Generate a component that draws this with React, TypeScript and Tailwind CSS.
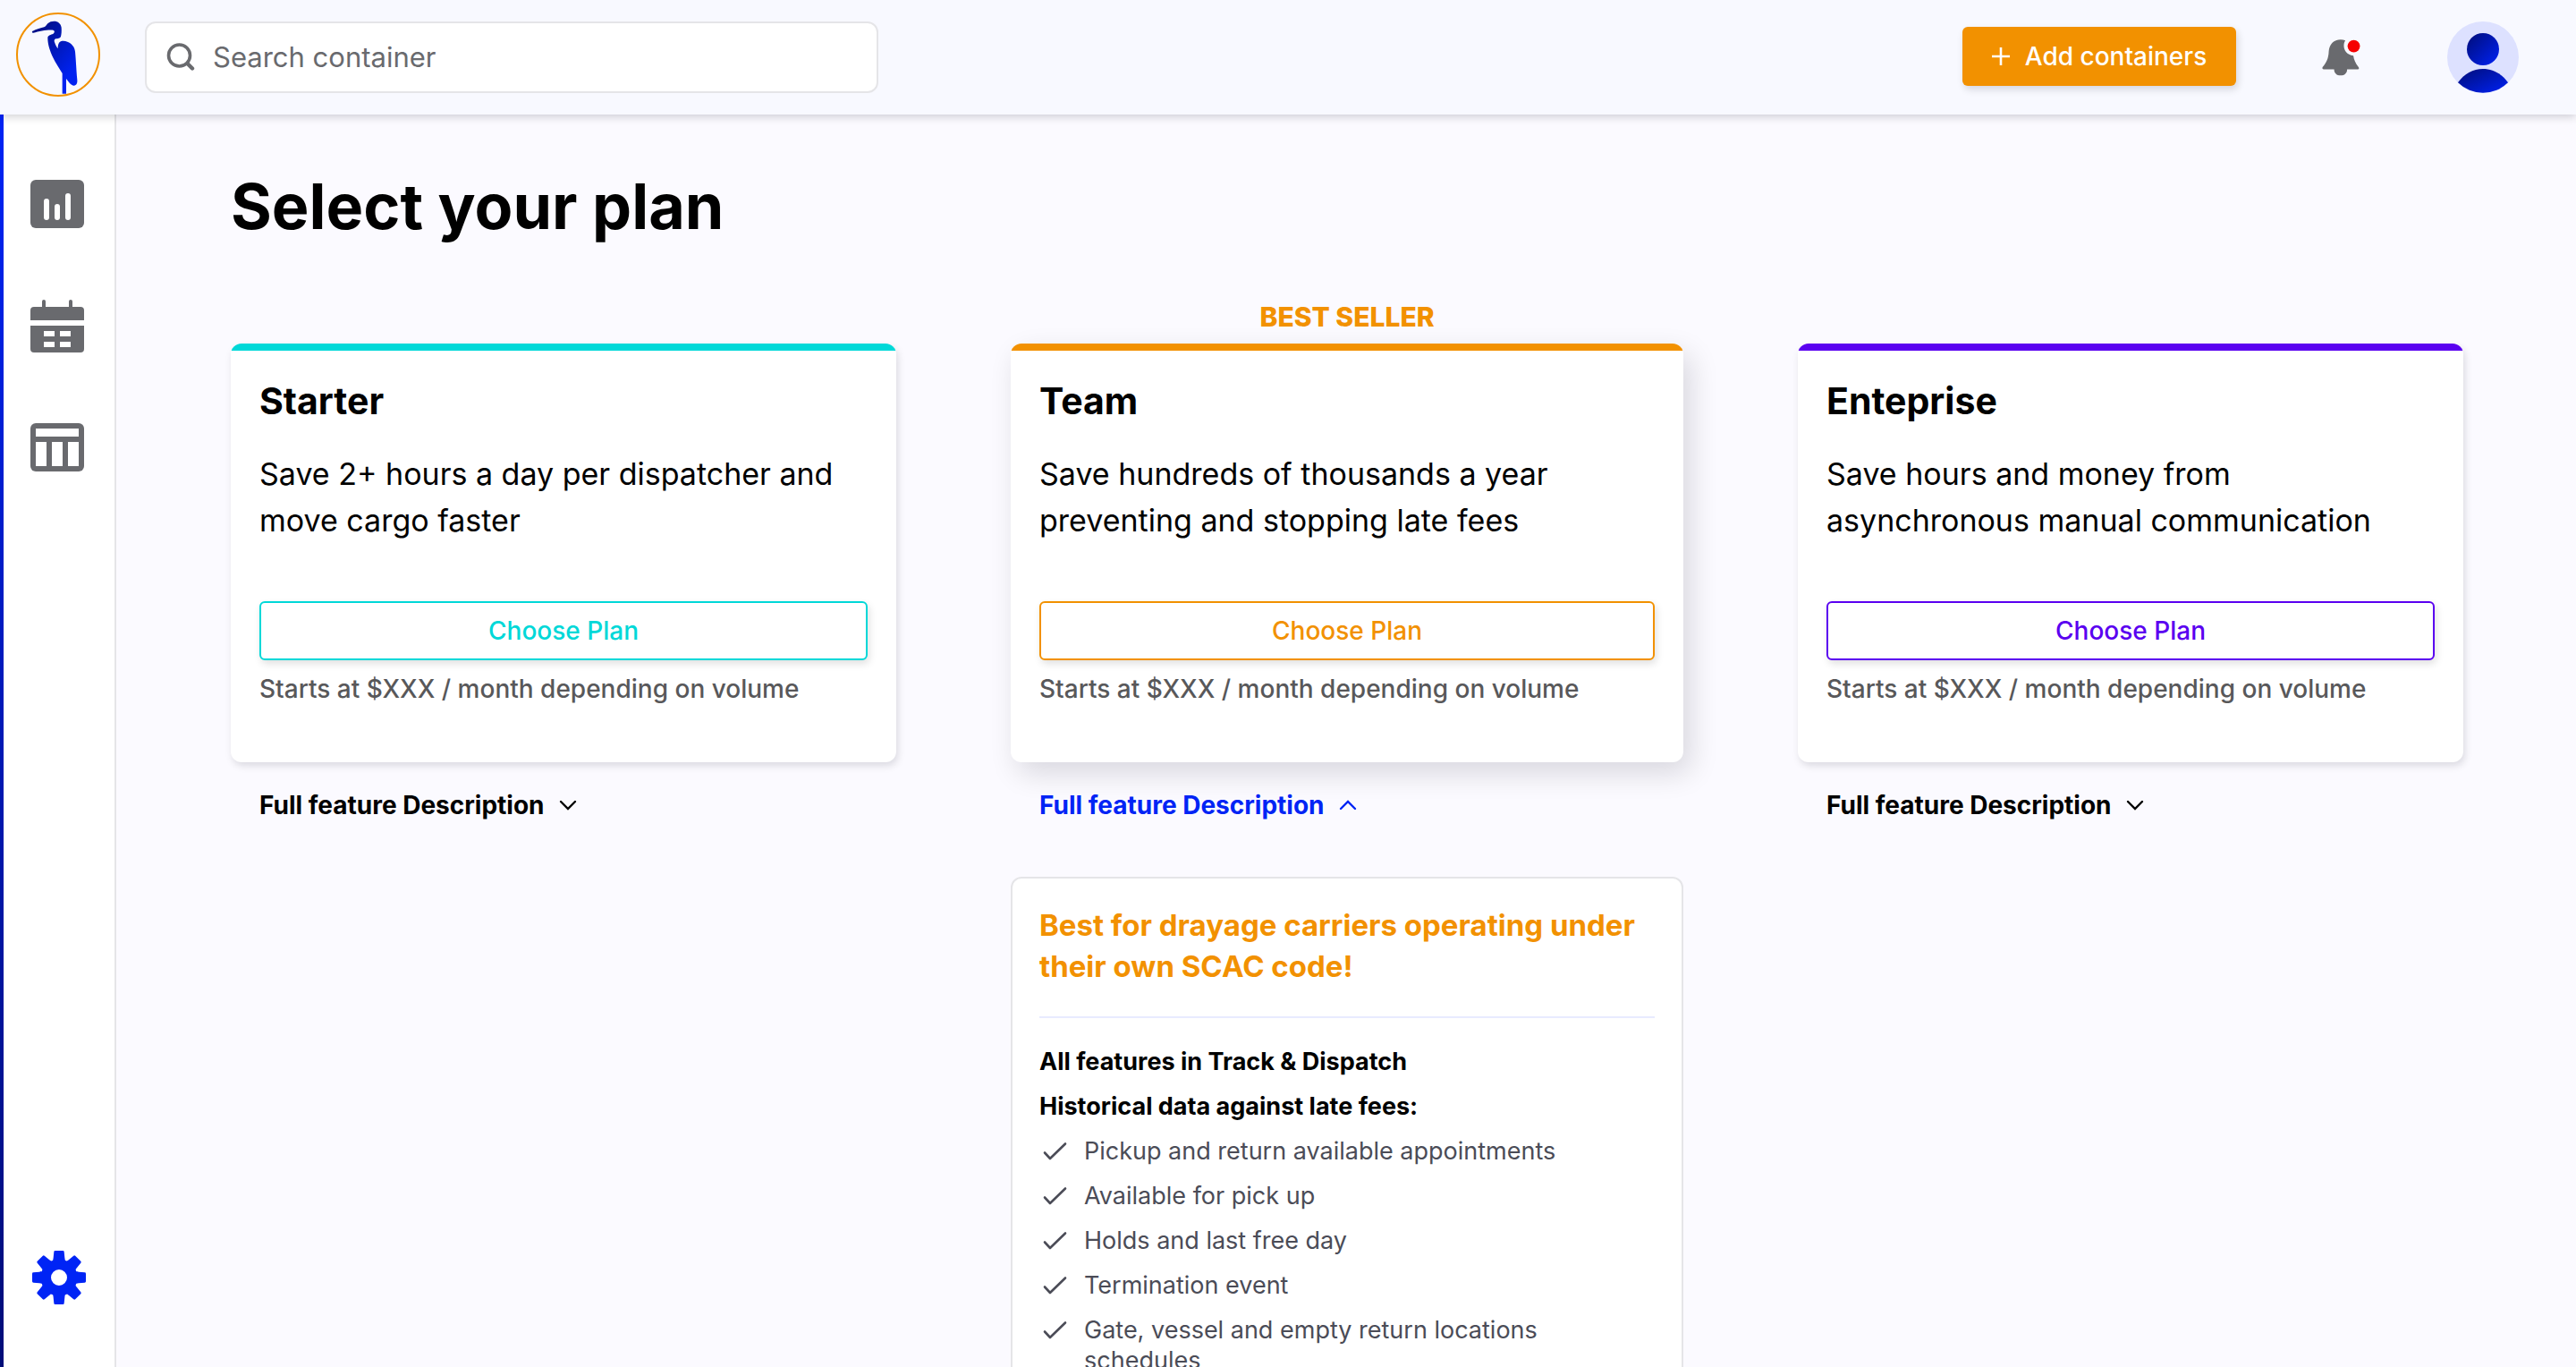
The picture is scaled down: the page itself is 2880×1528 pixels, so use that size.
import { useState } from "react";

function HeronLogo() {
  return (
    <svg viewBox="54 42 282 282" className="size-[94px]" aria-hidden="true">
      <defs>
        <linearGradient id="heron" x1="0" y1="0" x2="0.8" y2="1">
          <stop offset="0" stopColor="#000d78" />
          <stop offset="0.85" stopColor="#0022f0" />
        </linearGradient>
      </defs>
      <circle cx="195" cy="183" r="138" fill="none" stroke="#f29100" strokeWidth="6" />
      <path
        fill="url(#heron)"
        d="M108 105C122 98 138 94 148 91C155 88 155 84 160 79C166 73 173 71 181 71C195 71 204 79 206 92C207 104 206 115 204 122C202 129 193 129 187 130C181 132 181 138 184 144C187 152 190 158 194 163C194 154 195 146 200 141C206 136 218 137 226 140C241 146 251 158 252 173C254 190 256 232 259 268C260 279 257 287 248 287C237 286 230 274 222 264V314H209V246C198 228 186 210 177 191C168 172 160 148 160 128C160 119 168 118 175 115C182 112 185 106 180 102C172 97 134 103 112 110C108 111 107 108 108 105Z"
      />
    </svg>
  );
}

function SearchIcon() {
  return (
    <svg viewBox="0 0 32 32" className="size-8 shrink-0" fill="none" stroke="#696a6e" aria-hidden="true">
      <circle cx="14.5" cy="14" r="12" strokeWidth="3.6" />
      <path d="M23.5 23L29 28.5" strokeWidth="4.4" strokeLinecap="round" />
    </svg>
  );
}

function BellIcon() {
  return (
    <svg viewBox="20 100 130 124" className="h-[41px] w-[43px]" aria-hidden="true">
      <path
        fill="#696a6e"
        d="M83 101C60 101 45 117 43 140C42 165 35 178 22 194C20 199 22 201 26 201H61C61 214 70 222 83 222S105 214 105 201H141C146 201 146 197 143 193C133 180 128 168 126 155C105 152 93 138 94 118C95 111 97 106 99 104C94 102 89 101 83 101Z"
      />
      <circle cx="127.500" cy="123" r="21" fill="#f60000" />
    </svg>
  );
}

function AvatarIcon() {
  return (
    <svg viewBox="0 0 240 240" className="size-20" aria-hidden="true">
      <defs>
        <linearGradient id="avatar" x1="0" y1="0" x2="1" y2="1">
          <stop offset="0" stopColor="#000d78" />
          <stop offset="1" stopColor="#0022f5" />
        </linearGradient>
      </defs>
      <circle cx="120" cy="120" r="120" fill="#dde1ff" />
      <circle cx="120" cy="93" r="54" fill="url(#avatar)" />
      <path d="M36 205C56 176 87 159 120 159S184 176 204 205A120 120 0 0 1 36 205Z" fill="url(#avatar)" />
    </svg>
  );
}

function ChartIcon() {
  return (
    <svg viewBox="0 0 60 54" className="h-[54px] w-[60px]" aria-hidden="true">
      <rect width="60" height="54" rx="6" fill="#696a6e" />
      <g fill="#fff">
        <rect x="15" y="21" width="6" height="24" rx="3" />
        <rect x="27" y="27" width="6" height="18" rx="3" />
        <rect x="39" y="15" width="6" height="30" rx="3" />
      </g>
    </svg>
  );
}

function CalendarIcon() {
  return (
    <svg viewBox="0 0 60 59" className="h-[59px] w-[60px]" aria-hidden="true">
      <g fill="#696a6e">
        <rect x="13" y="0" width="4" height="12" rx="2" />
        <rect x="43" y="0" width="4" height="12" rx="2" />
        <path d="M0 23V12a4 4 0 0 1 4-4H56a4 4 0 0 1 4 4V23Z" />
        <path d="M0 29H60V55a4 4 0 0 1-4 4H4a4 4 0 0 1-4-4Z" />
      </g>
      <path fill="#fff" d="M15 35h12v6H15zM33 35h12v6H33zM15 47h12v6H15zM33 47h12v6H33z" />
    </svg>
  );
}

function TableIcon() {
  return (
    <svg viewBox="0 0 60 54" className="h-[54px] w-[60px]" aria-hidden="true">
      <rect width="60" height="54" rx="6" fill="#696a6e" />
      <path fill="#fff" d="M6 6h48v9H6zM6 21h12v27H6zM24 21h12v27H24zM42 21h12v27H42z" />
    </svg>
  );
}

function GearIcon() {
  return (
    <svg viewBox="-90 -90 180 180" className="size-[60px]" fill="#0024f5" aria-hidden="true">
      <circle r="44" fill="none" stroke="#0024f5" strokeWidth="34" />
      {[0, 45, 90, 135, 180, 225, 270, 315].map((angle) => (
        <path key={angle} transform={`rotate(${angle})`} d="M-23 -54C-20 -56 -20 -60 -19 -66L-17 -86Q-17 -90 -13 -90H13Q17 -90 17 -86L19 -66C20 -60 20 -56 23 -54Z" />
      ))}
    </svg>
  );
}

function Chevron({ up }: { up: boolean }) {
  return (
    <svg viewBox="0 0 20 12" className="h-3 w-5" fill="none" stroke="currentColor" strokeWidth="2.4" strokeLinecap="round" aria-hidden="true">
      <path d={up ? "M2 10L10 2L18 10" : "M2 2L10 10L18 2"} />
    </svg>
  );
}

function CheckIcon() {
  return (
    <svg viewBox="0 0 50 34" className="h-[34px] w-[50px] shrink-0" fill="none" stroke="#4b4c57" strokeWidth="2.6" strokeLinecap="round" strokeLinejoin="round" aria-hidden="true">
      <path d="M6 18.500L12 25L29 8.500" />
    </svg>
  );
}

type Plan = {
  name: string;
  blurb: string;
  stripe: string;
  button: string;
  shadow: string;
  badge?: string;
};

const plans: Plan[] = [
  {
    name: "Starter",
    blurb: "Save 2+ hours a day per dispatcher and move cargo faster",
    stripe: "bg-[#00d8d8]",
    button: "border-[#00d8d8] text-[#00d8d8]",
    shadow: "shadow-[2px_4px_8px_rgba(0,0,20,0.13)]",
  },
  {
    name: "Team",
    blurb: "Save hundreds of thousands a year preventing and stopping late fees",
    stripe: "bg-[#f29100]",
    button: "border-[#f29100] text-[#f29100]",
    shadow: "shadow-[8px_12px_32px_rgba(0,0,20,0.14)]",
    badge: "BEST SELLER",
  },
  {
    name: "Enteprise",
    blurb: "Save hours and money from asynchronous manual communication",
    stripe: "bg-[#5a00f0]",
    button: "border-[#5a00f0] text-[#5a00f0]",
    shadow: "shadow-[2px_4px_8px_rgba(0,0,20,0.13)]",
  },
];

const features = [
  "Pickup and return available appointments",
  "Available for pick up",
  "Holds and last free day",
  "Termination event",
  "Gate, vessel and empty return locations schedules",
];

function FeatureDetails() {
  return (
    <div className="mt-[62px] rounded-xl border-2 border-[#e5e5e8] bg-white px-[30px] pt-[29px] pb-8">
      <h3 className="text-[33px] leading-[46px] font-bold text-[#f29100]">
        Best for drayage carriers operating under their own SCAC code!
      </h3>
      <hr className="mt-[33px] border-t-2 border-[#e8ebff]" />
      <div className="mt-8 flex flex-col gap-4 text-[27px] leading-[34px]">
        <p className="font-bold">All features in Track &amp; Dispatch</p>
        <p className="font-bold">Historical data against late fees:</p>
        <ul className="flex flex-col gap-4 pr-8 text-[#4b4c57]">
          {features.map((feature) => (
            <li key={feature} className="flex">
              <CheckIcon />
              <span>{feature}</span>
            </li>
          ))}
        </ul>
      </div>
    </div>
  );
}

function PlanColumn({ plan, open, onToggle }: { plan: Plan; open: boolean; onToggle: () => void }) {
  return (
    <section>
      <p className="mb-3 h-9 text-center text-[30px] leading-9 font-extrabold text-[#f29100]">{plan.badge}</p>
      <div className={`overflow-hidden rounded-xl bg-white ${plan.shadow}`}>
        <div className={`h-2 ${plan.stripe}`} />
        <div className="px-8 pt-8 pb-16">
          <h2 className="text-[41px] leading-[48px] font-bold">{plan.name}</h2>
          <p className="mt-8 text-[34px] leading-[52px]">{plan.blurb}</p>
          <button
            type="button"
            className={`mt-16 h-[66px] w-full rounded-md border-2 bg-white text-[28px] font-medium shadow-[2px_4px_8px_rgba(0,0,0,0.12)] ${plan.button}`}
          >
            Choose Plan
          </button>
          <p className="mt-[14px] text-[28px] leading-9 font-medium text-[#58585a]">
            Starts at $XXX / month depending on volume
          </p>
        </div>
      </div>
      <button
        type="button"
        aria-expanded={open}
        onClick={onToggle}
        className={`mt-[30px] ml-8 flex items-center gap-4 text-[28px] leading-9 font-bold ${open ? "text-[#0024f5]" : "text-black"}`}
      >
        Full feature Description
        <Chevron up={open} />
      </button>
      {open && <FeatureDetails />}
    </section>
  );
}

export default function App() {
  const [openPlan, setOpenPlan] = useState("Team");
  return (
    <div className="flex h-screen flex-col overflow-hidden bg-[#fbfaff] font-['Inter',sans-serif] text-black">
      <header className="z-10 flex h-32 shrink-0 items-center bg-[#f8f9ff] pr-16 pl-[18px] shadow-[0_2px_10px_rgba(0,0,20,0.2)]">
        <a href="#home" aria-label="Home" className="mb-1.5">
          <HeronLogo />
        </a>
        <label className="ml-[50px] flex h-20 w-[820px] items-center gap-5 rounded-xl border-2 border-[#e5e5e8] bg-white px-[22px]">
          <SearchIcon />
          <input
            type="text"
            aria-label="Search container"
            placeholder="Search container"
            className="w-full bg-transparent text-[31px] leading-10 outline-none placeholder:text-[#696a6e]"
          />
        </label>
        <button
          type="button"
          className="mb-0.5 ml-auto flex h-[66px] w-[306px] items-center justify-center gap-[17px] rounded-md bg-[#f29100] text-[28px] font-medium text-white shadow-[2px_4px_8px_rgba(0,0,20,0.14)]"
        >
          <svg viewBox="0 0 20 20" className="size-5" stroke="#fff" strokeWidth="2.6" aria-hidden="true">
            <path d="M0 10H20M10 0V20" />
          </svg>
          Add containers
        </button>
        <button type="button" aria-label="Notifications" className="ml-24">
          <BellIcon />
        </button>
        <button type="button" aria-label="Account" className="ml-[97px]">
          <AvatarIcon />
        </button>
      </header>
      <div className="flex min-h-0 flex-1">
        <div className="w-1 shrink-0 bg-linear-to-b from-[#0024f5] to-[#000d78]" />
        <nav className="flex w-[126px] shrink-0 flex-col items-center border-r-2 border-[#e5e5e8] bg-white pt-[73px] pr-1 pb-[70px]">
          <a href="#dashboard" aria-label="Dashboard">
            <ChartIcon />
          </a>
          <a href="#calendar" aria-label="Calendar" className="mt-20">
            <CalendarIcon />
          </a>
          <a href="#table" aria-label="Table" className="mt-[79px]">
            <TableIcon />
          </a>
          <a href="#settings" aria-label="Settings" className="mt-auto ml-1">
            <GearIcon />
          </a>
        </nav>
        <main className="flex-1 overflow-y-auto pt-[61px] pr-[126px] pb-16 pl-32 [scrollbar-width:none]">
          <h1 className="text-[70px] leading-[84px] font-bold">Select your plan</h1>
          <div className="mt-[63px] grid grid-cols-[744fr_752fr_744fr] items-start gap-32">
            {plans.map((plan) => (
              <PlanColumn
                key={plan.name}
                plan={plan}
                open={openPlan === plan.name}
                onToggle={() => setOpenPlan(openPlan === plan.name ? "" : plan.name)}
              />
            ))}
          </div>
        </main>
      </div>
    </div>
  );
}
